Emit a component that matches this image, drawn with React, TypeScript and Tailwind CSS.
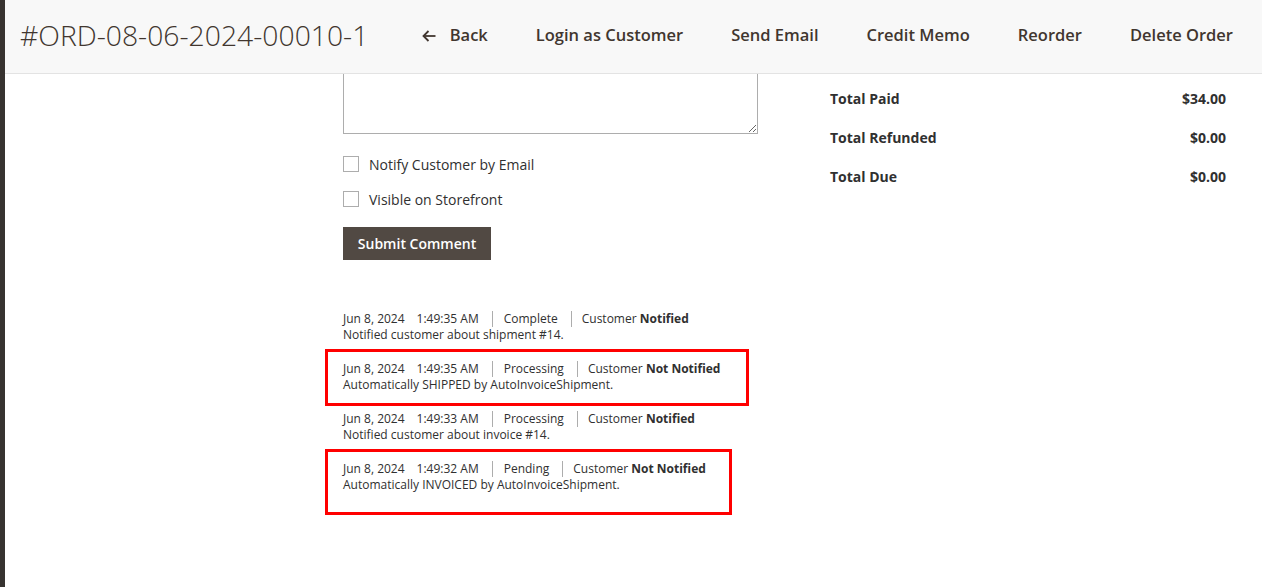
import React from 'react';

const actions = ['Login as Customer', 'Send Email', 'Credit Memo', 'Reorder', 'Delete Order'];

interface Note {
  date: string;
  time: string;
  status: string;
  notified: boolean;
  text: string;
  box?: string;
}

const notes: Note[] = [
  { date: 'Jun 8, 2024', time: '1:49:35 AM', status: 'Complete', notified: true, text: 'Notified customer about shipment #14.' },
  { date: 'Jun 8, 2024', time: '1:49:35 AM', status: 'Processing', notified: false, text: 'Automatically SHIPPED by AutoInvoiceShipment.', box: 'w-[424px] h-[57px]' },
  { date: 'Jun 8, 2024', time: '1:49:33 AM', status: 'Processing', notified: true, text: 'Notified customer about invoice #14.' },
  { date: 'Jun 8, 2024', time: '1:49:32 AM', status: 'Pending', notified: false, text: 'Automatically INVOICED by AutoInvoiceShipment.', box: 'w-[407px] h-[66px]' },
];

const totals = [
  ['Total Paid', '$34.00'],
  ['Total Refunded', '$0.00'],
  ['Total Due', '$0.00'],
];

const BackArrow = () => (
  <svg width="14" height="12" viewBox="0 0 14 12" fill="none" stroke="currentColor" strokeWidth="1.8">
    <path d="M13.5 6H1.5" />
    <path d="M6.5 1L1.5 6L6.5 11" />
  </svg>
);

export default function App() {
  return (
    <div className="flex h-[587px] overflow-hidden bg-white font-['Open_Sans',sans-serif] text-[#303030]">
      <div className="w-[5px] shrink-0 bg-[#373330]" />

      <div className="flex-1 flex flex-col">
        {/* Page header */}
        <header className="h-[74px] shrink-0 flex items-center justify-between bg-[#f8f8f8] border-b border-[#e3e3e3] pl-[15px] pr-[29px] pb-[2px]">
          <h1 className="text-[28.3px] font-light text-[#41362f] leading-none">#ORD-08-06-2024-00010-1</h1>
          <nav className="flex items-center gap-12 text-[16.5px] font-semibold text-[#41362f]">
            <button className="flex items-center gap-[14px]">
              <BackArrow />
              Back
            </button>
            {actions.map((a) => (
              <button key={a}>{a}</button>
            ))}
          </nav>
        </header>

        {/* Content */}
        <div className="flex flex-1">
          <div className="w-[338px] shrink-0" />

          <div className="w-[415px] shrink-0">
            <textarea className="block w-full h-[60px] border border-t-0 border-[#adadad] outline-none" />

            <div className="mt-[20px] flex flex-col gap-[15px] text-[14px]">
              <label className="flex items-center h-[20px]">
                <span className="w-4 h-4 border border-[#adadad] bg-white" />
                <span className="ml-[10px]">Notify Customer by Email</span>
              </label>
              <label className="flex items-center h-[20px]">
                <span className="w-4 h-4 border border-[#adadad] bg-white" />
                <span className="ml-[10px]">Visible on Storefront</span>
              </label>
            </div>

            <button className="mt-[18px] h-[33px] w-[148px] bg-[#514943] text-white text-[14px] font-semibold">
              Submit Comment
            </button>

            <ul className="mt-[51px] flex flex-col gap-[18px] text-[12px] leading-[16px]">
              {notes.map((n, i) => (
                <li key={i} className="relative">
                  {n.box && (
                    <div className={`absolute -top-[12px] -left-[18px] border-[3px] border-[#ff0000] ${n.box}`} />
                  )}
                  <div className="flex items-center">
                    <span>{n.date}</span>
                    <span className="ml-3">{n.time}</span>
                    <span className="ml-[13px] pl-[11px] border-l border-[#adadad]">{n.status}</span>
                    <span className="ml-[13px] pl-[10px] border-l border-[#adadad]">
                      Customer <b className="font-bold">{n.notified ? 'Notified' : 'Not Notified'}</b>
                    </span>
                  </div>
                  <div>{n.text}</div>
                </li>
              ))}
            </ul>
          </div>

          <div className="w-[72px] shrink-0" />

          <div className="w-[396px] shrink-0 pt-[5px]">
            {totals.map(([label, value]) => (
              <div key={label} className="h-[39px] flex items-center justify-between text-[14px] font-bold">
                <span>{label}</span>
                <span>{value}</span>
              </div>
            ))}
          </div>
        </div>
      </div>
    </div>
  );
}
